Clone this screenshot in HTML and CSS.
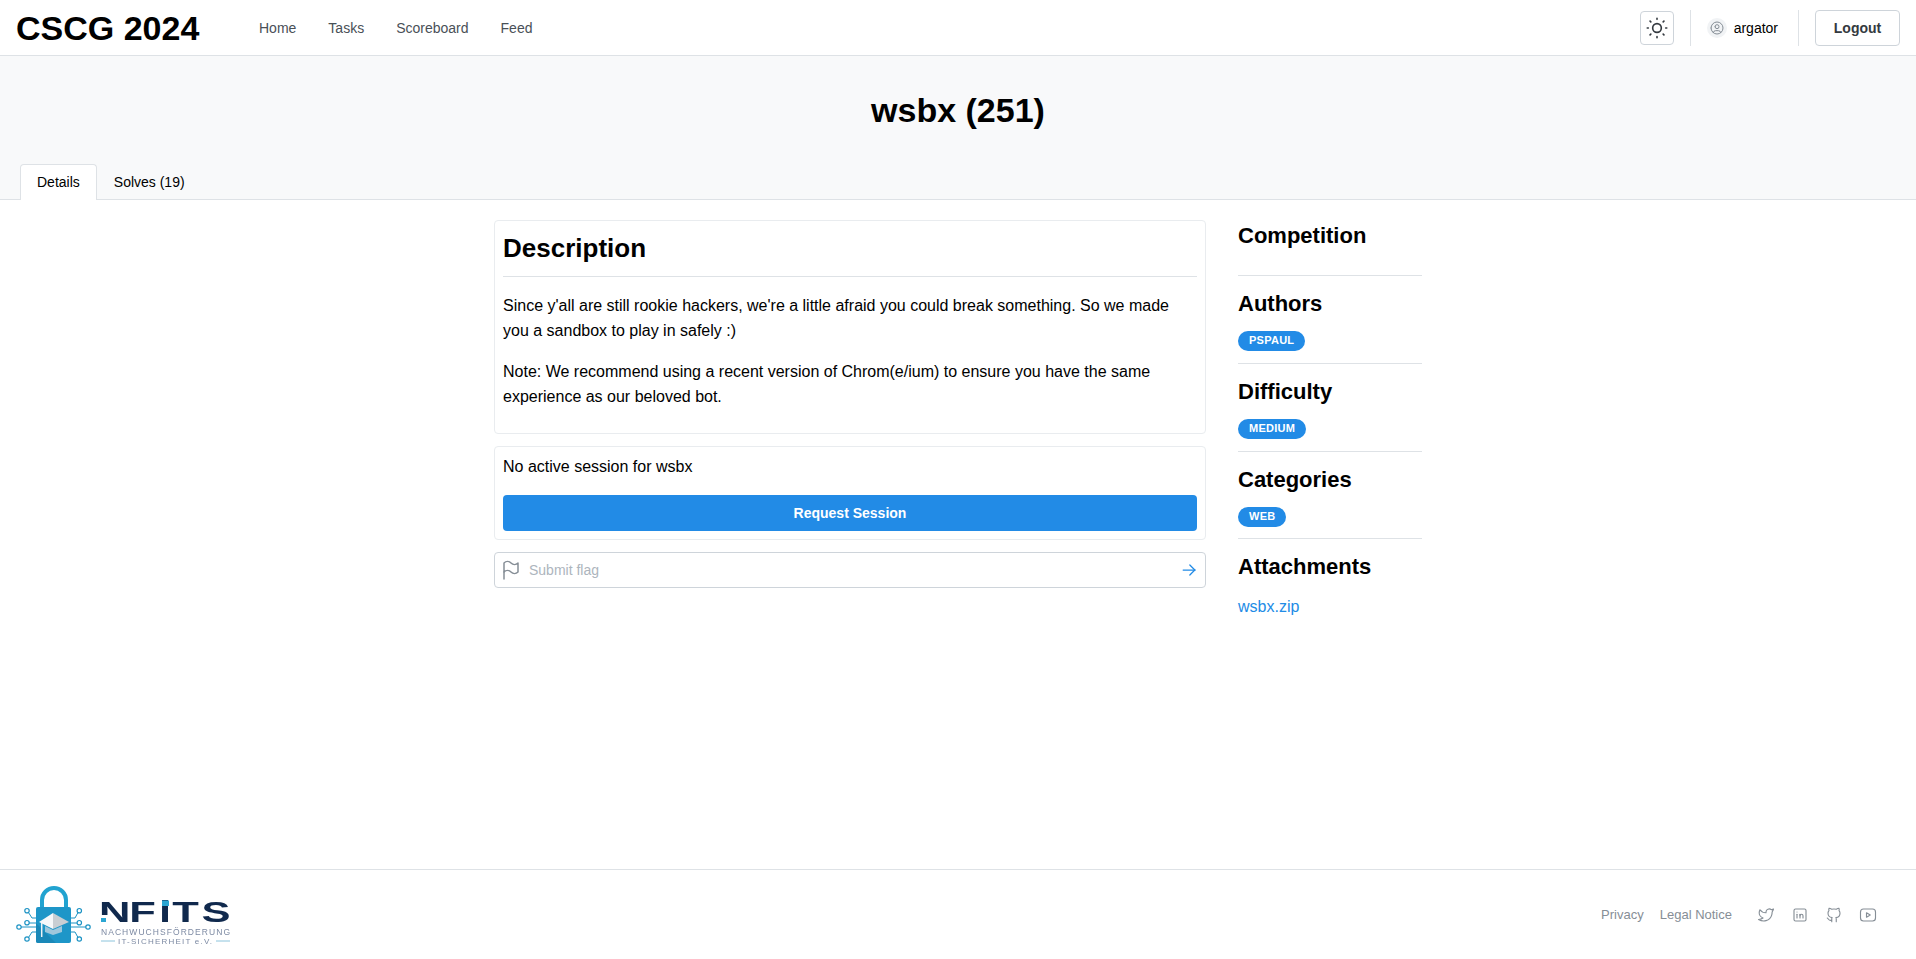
FILE: index.html
```html
<!DOCTYPE html>
<html lang="en">
<head>
    <meta charset="UTF-8">
    <meta name="viewport" content="width=device-width, initial-scale=1.0">
    <title>wsbx (251) - CSCG 2024</title>
    <link rel="stylesheet" href="styles.css">
</head>
<body>
    <header class="topbar">
        <div class="topbar-left">
            <a class="brand">CSCG 2024</a>
            <nav class="nav">
                <a>Home</a>
                <a>Tasks</a>
                <a>Scoreboard</a>
                <a>Feed</a>
            </nav>
        </div>
        <div class="topbar-right">
            <button class="theme-btn">
                <svg class="icon icon-26" viewBox="0 0 24 24"><path d="M12 12m-4 0a4 4 0 1 0 8 0a4 4 0 1 0 -8 0"/><path d="M3 12h1m8 -9v1m8 8h1m-9 8v1m-6.4 -15.4l.7 .7m12.1 -.7l-.7 .7m0 11.4l.7 .7m-12.1 -.7l-.7 .7"/></svg>
            </button>
            <span class="vline vline-a"></span>
            <div class="user">
                <span class="avatar">
                    <svg class="icon icon-16" viewBox="0 0 24 24"><path d="M12 12m-9 0a9 9 0 1 0 18 0a9 9 0 1 0 -18 0"/><path d="M12 10m-3 0a3 3 0 1 0 6 0a3 3 0 1 0 -6 0"/><path d="M6.168 18.849a4 4 0 0 1 3.832 -2.849h4a4 4 0 0 1 3.834 2.855"/></svg>
                </span>
                <span class="username">argator</span>
            </div>
            <span class="vline vline-b"></span>
            <button class="logout-btn">Logout</button>
        </div>
    </header>

    <section class="hero">
        <h1>wsbx (251)</h1>
        <div class="tabs">
            <a class="tab active">Details</a>
            <a class="tab">Solves (19)</a>
        </div>
    </section>

    <main class="content">
        <div class="task-col">
            <div class="card description">
                <h2>Description</h2>
                <hr>
                <p>Since y'all are still rookie hackers, we're a little afraid you could break something. So we made you a sandbox to play in safely :)</p>
                <p>Note: We recommend using a recent version of Chrom(e/ium) to ensure you have the same experience as our beloved bot.</p>
            </div>
            <div class="card session">
                <div class="session-text">No active session for wsbx</div>
                <button class="primary-btn">Request Session</button>
            </div>
            <div class="flag-input">
                <svg class="icon icon-24 flag-icon" viewBox="0 0 24 24"><path d="M5 5a5 5 0 0 1 7 0a5 5 0 0 0 7 0v9a5 5 0 0 1 -7 0a5 5 0 0 0 -7 0v-9z"/><path d="M5 21v-7"/></svg>
                <span class="placeholder">Submit flag</span>
                <svg class="icon icon-20 arrow-icon" viewBox="0 0 24 24"><path d="M5 12l14 0"/><path d="M13 18l6 -6"/><path d="M13 6l6 6"/></svg>
            </div>
        </div>
        <aside class="side-col">
            <div class="side-block first">
                <h3>Competition</h3>
            </div>
            <div class="side-block">
                <h3>Authors</h3>
                <span class="badge">pspaul</span>
            </div>
            <div class="side-block">
                <h3>Difficulty</h3>
                <span class="badge">medium</span>
            </div>
            <div class="side-block short">
                <h3>Categories</h3>
                <span class="badge">web</span>
            </div>
            <div class="side-block last">
                <h3>Attachments</h3>
                <a class="attachment">wsbx.zip</a>
            </div>
        </aside>
    </main>

    <footer class="footer">
        <svg class="logo" viewBox="0 0 220 64">
            <!-- circuit lines -->
            <g class="logo-wire">
                <path d="M20 42H5"/>
                <path d="M20 38H13"/>
                <path d="M20 33H16L12.500 27.500"/>
                <path d="M20 47H16L12.500 52.500"/>
                <path d="M55 42H70"/>
                <path d="M55 38H61"/>
                <path d="M55 33H59L62 27.500"/>
                <path d="M55 47H59L62 52.500"/>
            </g>
            <g class="logo-node">
                <circle cx="3" cy="42" r="2.200"/>
                <circle cx="11" cy="25.700" r="2.200"/>
                <circle cx="11" cy="37.700" r="2.200"/>
                <circle cx="11" cy="54" r="2.200"/>
                <circle cx="72" cy="42" r="2.200"/>
                <circle cx="63.300" cy="25.700" r="2.200"/>
                <circle cx="63.300" cy="37.700" r="2.200"/>
                <circle cx="63.300" cy="54" r="2.200"/>
            </g>
            <!-- lock with graduation cap -->
            <path class="logo-shackle" d="M26 24V15A12 12 0 0 1 50 15V24"/>
            <rect class="logo-body" x="20" y="22" width="35" height="36" rx="2"/>
            <path class="logo-shade" d="M20 38L40 58H22a2 2 0 0 1 -2 -2z"/>
            <path class="logo-skirt" d="M29 41L37 45L46 41V47L37 50L29 47z"/>
            <path class="logo-cap-l" d="M37 28L23 37L37 44z"/>
            <path class="logo-cap-r" d="M37 28L53 37L37 44z"/>
            <path class="logo-tassel" d="M25.700 38V52"/>
            <!-- wordmark -->
            <text class="logo-name" transform="translate(83 37) scale(1.45 1)" x="0 20.800 41.400 50.500 70.700" y="0">NFiTS</text>
            <rect class="logo-gap" x="84" y="30" width="8" height="8"/>
            <rect class="logo-dot" x="85" y="33" width="5" height="4"/>
            <rect class="logo-dot" x="146" y="15.500" width="7" height="5.500"/>
            <text class="logo-sub" x="85" y="50" textLength="129" lengthAdjust="spacing">NACHWUCHSFÖRDERUNG</text>
            <text class="logo-sub2" x="102" y="59" textLength="94" lengthAdjust="spacing">IT-SICHERHEIT e.V.</text>
            <path class="logo-rule" d="M85 56H99M200 56H214"/>
        </svg>
        <div class="footer-right">
            <a>Privacy</a>
            <a>Legal Notice</a>
            <div class="socials">
                <svg class="icon icon-18" viewBox="0 0 24 24"><path d="M22 4.010c-1 .49 -1.980 .689 -3 .99c-1.121 -1.265 -2.783 -1.335 -4.380 -.737s-2.643 2.060 -2.620 3.737v1c-3.245 .083 -6.135 -1.395 -8 -4c0 0 -4.182 7.433 4 11c-1.872 1.247 -3.739 2.088 -6 2c3.308 1.803 6.913 2.423 10.034 1.517c3.580 -1.040 6.522 -3.723 7.651 -7.742a13.840 13.840 0 0 0 .497 -3.753c0 -.249 1.510 -2.772 1.818 -4.013z"/></svg>
                <svg class="icon icon-18" viewBox="0 0 24 24"><path d="M4 4m0 2a2 2 0 0 1 2 -2h12a2 2 0 0 1 2 2v12a2 2 0 0 1 -2 2h-12a2 2 0 0 1 -2 -2z"/><path d="M8 11l0 5"/><path d="M8 8l0 .01"/><path d="M12 16l0 -5"/><path d="M16 16v-3a2 2 0 0 0 -4 0"/></svg>
                <svg class="icon icon-18" viewBox="0 0 24 24"><path d="M9 19c-4.300 1.400 -4.300 -2.500 -6 -3m12 5v-3.500c0 -1 .1 -1.400 -.5 -2c2.800 -.3 5.500 -1.400 5.500 -6a4.600 4.600 0 0 0 -1.300 -3.200a4.200 4.200 0 0 0 -.1 -3.200s-1.100 -.3 -3.500 1.300a12.300 12.300 0 0 0 -6.200 0c-2.400 -1.600 -3.500 -1.300 -3.500 -1.300a4.200 4.200 0 0 0 -.1 3.200a4.600 4.600 0 0 0 -1.300 3.200c0 4.600 2.700 5.700 5.500 6c-.6 .6 -.6 1.200 -.5 2v3.500"/></svg>
                <svg class="icon icon-18" viewBox="0 0 24 24"><path d="M2 8a4 4 0 0 1 4 -4h12a4 4 0 0 1 4 4v8a4 4 0 0 1 -4 4h-12a4 4 0 0 1 -4 -4v-8z"/><path d="M10 9l5 3l-5 3z"/></svg>
            </div>
        </div>
    </footer>
</body>
</html>
```
FILE: styles.css
```css
* {
    box-sizing: border-box;
}
body {
    font-family: "Liberation Sans", Arial, sans-serif;
    font-size: 16px;
    line-height: 1.55;
    margin: 0;
    min-height: 100vh;
    display: flex;
    flex-direction: column;
    background: #fff;
    color: #000;
}
button {
    font-family: inherit;
    cursor: pointer;
}
.icon {
    display: block;
    fill: none;
    stroke: currentColor;
    stroke-width: 1.5;
    stroke-linecap: round;
    stroke-linejoin: round;
}
.icon-26 {
    width: 26px;
    height: 26px;
}
.icon-24 {
    width: 24px;
    height: 24px;
}
.icon-20 {
    width: 20px;
    height: 20px;
}
.icon-16 {
    width: 16px;
    height: 16px;
}
.icon-18 {
    width: 18px;
    height: 18px;
}

/* header */
.topbar {
    height: 56px;
    flex: none;
    display: flex;
    align-items: center;
    justify-content: space-between;
    padding: 0 16px;
    border-bottom: 1px solid #dee2e6;
}
.topbar-left {
    display: flex;
    align-items: center;
}
.brand {
    font-size: 34px;
    font-weight: 700;
    line-height: 1;
    width: 243px;
    padding-top: 1px;
}
.nav {
    display: flex;
    gap: 32px;
    font-size: 14px;
    color: #495057;
    padding-top: 2px;
}
.topbar-right {
    display: flex;
    align-items: center;
}
.theme-btn {
    width: 34px;
    height: 34px;
    padding: 0;
    display: flex;
    align-items: center;
    justify-content: center;
    background: #fff;
    border: 1px solid #ced4da;
    border-radius: 4px;
    color: #343a40;
}
.vline {
    width: 1px;
    height: 36px;
    background: #dee2e6;
}
.vline-a {
    margin: 0 16px;
}
.vline-b {
    margin: 0 16px 0 20px;
}
.user {
    display: flex;
    align-items: center;
    gap: 7px;
    font-size: 14px;
}
.username {
    padding-top: 2px;
}
.avatar {
    width: 20px;
    height: 20px;
    border-radius: 50%;
    background: #f1f3f5;
    color: #868e96;
    display: flex;
    align-items: center;
    justify-content: center;
}
.logout-btn {
    width: 85px;
    height: 36px;
    padding: 0;
    background: #fff;
    border: 1px solid #ced4da;
    border-radius: 4px;
    font-size: 14px;
    font-weight: 700;
    color: #343a40;
}

/* title and tabs */
.hero {
    flex: none;
    height: 144px;
    background: #f8f9fa;
    border-bottom: 1px solid #dee2e6;
    display: flex;
    flex-direction: column;
    justify-content: flex-end;
}
.hero h1 {
    margin: 0 0 31px;
    font-size: 34px;
    line-height: 46px;
    text-align: center;
}
.tabs {
    display: flex;
    padding-left: 20px;
    font-size: 14px;
    margin-bottom: -1px;
}
.tab {
    height: 36px;
    padding: 0 16px;
    line-height: 35px;
    border: 1px solid transparent;
    border-bottom: none;
}
.tab.active {
    background: #fff;
    border-color: #dee2e6;
    border-radius: 4px 4px 0 0;
}

/* main columns */
.content {
    display: flex;
    justify-content: center;
    gap: 32px;
    padding-top: 20px;
}
.task-col {
    width: 712px;
}
.side-col {
    width: 184px;
}
.card {
    border: 1px solid #e9ecef;
    border-radius: 4px;
    padding: 8px;
    margin-bottom: 12px;
}
.description {
    height: 214px;
}
.description h2 {
    margin: 0;
    font-size: 26px;
    line-height: 38px;
}
.description hr {
    border: none;
    border-top: 1px solid #dee2e6;
    margin: 9px 0 16px;
}
.description p {
    margin: 0 0 16px;
    line-height: 25px;
}
.session {
    height: 94px;
}
.session-text {
    line-height: 23px;
    margin-bottom: 17px;
}
.primary-btn {
    display: block;
    width: 100%;
    height: 36px;
    border: none;
    border-radius: 4px;
    background: #228be6;
    color: #fff;
    font-size: 14px;
    font-weight: 700;
}
.flag-input {
    height: 36px;
    display: flex;
    align-items: center;
    border: 1px solid #ced4da;
    border-radius: 4px;
    padding: 0 6px 0 4px;
}
.flag-icon {
    color: #868e96;
}
.placeholder {
    flex: 1;
    margin-left: 6px;
    padding-top: 1px;
    font-size: 14px;
    color: #adb5bd;
}
.arrow-icon {
    color: #228be6;
}

/* sidebar */
.side-block {
    height: 88px;
    border-bottom: 1px solid #dee2e6;
}
.side-block.first {
    height: 56px;
}
.side-block.short {
    height: 87px;
}
.side-block.last {
    border-bottom: none;
}
.side-block h3 {
    margin: 0;
    padding-top: 11px;
    font-size: 22px;
    line-height: 34px;
}
.side-block.first h3 {
    padding-top: 0;
    line-height: 32px;
}
.badge {
    display: inline-block;
    height: 20px;
    margin-top: 10px;
    padding: 0 11px;
    border-radius: 10px;
    background: #228be6;
    color: #fff;
    font-size: 11px;
    font-weight: 700;
    line-height: 19px;
    letter-spacing: 0.25px;
    text-transform: uppercase;
    vertical-align: top;
}
.attachment {
    display: block;
    margin-top: 11px;
    color: #228be6;
}

/* footer */
.footer {
    flex: none;
    margin-top: auto;
    height: 90px;
    border-top: 1px solid #dee2e6;
    display: flex;
    justify-content: space-between;
    padding: 15px 39px 0 16px;
}
.logo {
    width: 220px;
    height: 64px;
    filter: blur(0.3px);
}
.logo-wire {
    fill: none;
    stroke: #1d93c4;
    stroke-width: 1;
}
.logo-node {
    fill: #fff;
    stroke: #1d93c4;
    stroke-width: 1.2;
}
.logo-shackle {
    fill: none;
    stroke: #22a3d0;
    stroke-width: 4;
}
.logo-body {
    fill: #1e96c8;
}
.logo-shade {
    fill: #1a88b8;
}
.logo-skirt {
    fill: #9fc7dc;
}
.logo-cap-l {
    fill: #f6f8fa;
}
.logo-cap-r {
    fill: #c9ced3;
}
.logo-tassel {
    fill: none;
    stroke: #eef2f5;
    stroke-width: 1.5;
}
.logo-gap {
    fill: #fff;
}
.logo-dot {
    fill: #2ba6d3;
}
.logo-name {
    font-size: 30px;
    font-weight: 700;
    fill: #10294d;
}
.logo-sub {
    font-size: 8.500px;
    fill: #7d8aa3;
}
.logo-sub2 {
    font-size: 8px;
    fill: #7d8aa3;
}
.logo-rule {
    fill: none;
    stroke: #8cc4dc;
    stroke-width: 1;
}
.footer-right {
    display: flex;
    align-items: center;
    height: 60px;
    gap: 16px;
    font-size: 13px;
    color: #868e96;
}
.socials {
    display: flex;
    gap: 16px;
    margin-left: 9px;
}
```
